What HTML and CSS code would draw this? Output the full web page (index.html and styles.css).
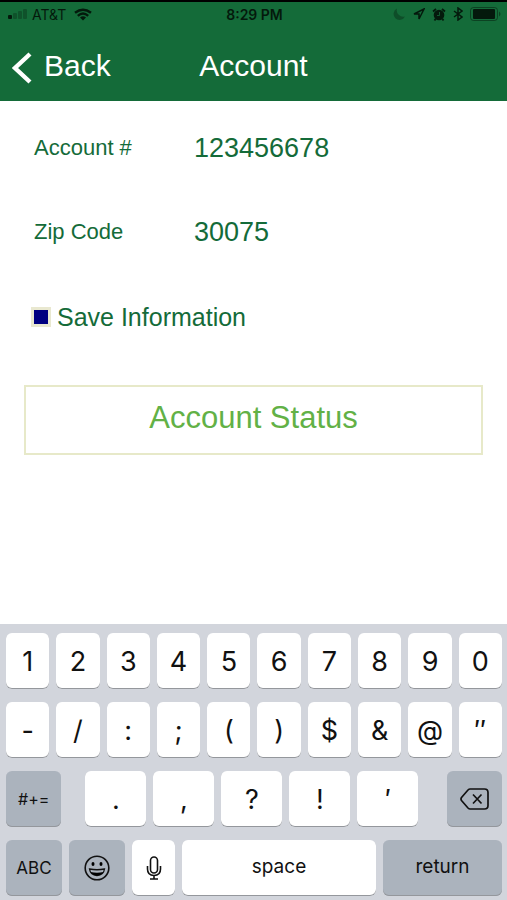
FILE: index.html
```html
<!DOCTYPE html>
<html lang="en">
<head>
<meta charset="utf-8">
<meta name="viewport" content="width=device-width, initial-scale=1">
<title>Account</title>
<link rel="stylesheet" href="styles.css">
</head>
<body>
<header class="header">
  <div class="status">
    <div class="status-side">
      <svg class="signal" width="20" height="12" viewBox="0 0 20 12" aria-hidden="true">
        <rect x="0" y="7" width="4" height="4" rx="1"/>
        <g opacity=".3"><rect x="5" y="5" width="4" height="6" rx="1"/><rect x="10" y="3" width="4" height="8" rx="1"/><rect x="15" y="1" width="4" height="10" rx="1"/></g>
      </svg>
      <span class="carrier">AT&amp;T</span>
      <svg width="18" height="13" viewBox="0 0 18 13" fill="none" stroke="currentColor" stroke-width="2.4" aria-hidden="true">
        <path d="M1 4.8Q9-1.5 17 4.8M3.8 7.8Q9 3.4 14.2 7.8"/>
        <path d="M6 9.5Q9 7.2 12 9.5L9 12.6Z" fill="currentColor" stroke="none"/>
      </svg>
    </div>
    <time class="clock">8:29 PM</time>
    <div class="status-side status-right">
      <svg width="13" height="12" viewBox="0 0 13 12" opacity=".35" aria-hidden="true"><path d="M4 .5A6 6 0 1 0 12 8.500A6.500 6.500 0 0 1 4 .5Z"/></svg>
      <svg width="12" height="12" viewBox="0 0 12 12" fill="none" stroke="currentColor" stroke-width="1.5" aria-hidden="true"><path d="M11 1L1 6H6V11Z"/></svg>
      <svg width="14" height="13" viewBox="0 0 14 13" aria-hidden="true"><circle cx="7" cy="7" r="5.3"/><path d="M1 3.5L4 1M13 3.5L10 1M3.5 11L2.5 12.5M10.5 11L11.500 12.5" stroke="currentColor" stroke-width="1.8"/><path d="M7.500 4V7.500H5" fill="none" stroke="#146b39" stroke-width=".8"/></svg>
      <svg width="10" height="14" viewBox="0 0 10 14" fill="none" stroke="currentColor" stroke-width="1.5" aria-hidden="true"><path d="M1 4L9 10L5 13V1L9 4L1 10"/></svg>
      <svg width="31" height="14" viewBox="0 0 31 14" aria-hidden="true"><rect x=".5" y=".5" width="27" height="13" rx="3" fill="none" stroke="currentColor" opacity=".5"/><rect x="3" y="2" width="22" height="10" rx="1"/><path d="M29 4.500Q32 7 29 9.500Z" opacity=".5"/></svg>
    </div>
  </div>
  <nav class="nav">
    <a class="back" href="#">
      <svg width="20" height="34" viewBox="0 0 20 34" fill="none" stroke="currentColor" stroke-width="4.4" aria-hidden="true"><path d="M18 3L3 17L18 31"/></svg>
      <span>Back</span>
    </a>
    <h1 class="title">Account</h1>
  </nav>
</header>

<main class="content">
  <form class="form">
    <div class="field">
      <label for="account">Account #</label>
      <input id="account" type="text" inputmode="numeric" value="123456678">
    </div>
    <div class="field">
      <label for="zip">Zip Code</label>
      <input id="zip" type="text" inputmode="numeric" value="30075">
    </div>
    <div class="save">
      <input id="save" type="checkbox" checked>
      <label for="save">Save Information</label>
    </div>
    <button class="submit" type="button">Account Status</button>
  </form>
</main>

<section class="keyboard" aria-label="Keyboard">
  <div class="row">
    <button class="key">1</button><button class="key">2</button><button class="key">3</button><button class="key">4</button><button class="key">5</button><button class="key">6</button><button class="key">7</button><button class="key">8</button><button class="key">9</button><button class="key">0</button>
  </div>
  <div class="row">
    <button class="key">-</button><button class="key">/</button><button class="key">:</button><button class="key">;</button><button class="key">(</button><button class="key">)</button><button class="key">$</button><button class="key">&amp;</button><button class="key">@</button><button class="key">″</button>
  </div>
  <div class="row row-marks">
    <button class="key dark symbols">#+=</button>
    <div class="marks">
      <button class="key">.</button><button class="key">,</button><button class="key">?</button><button class="key">!</button><button class="key">′</button>
    </div>
    <button class="key dark" aria-label="Delete">
      <svg width="29" height="22" viewBox="0 0 29 22" fill="none" stroke="currentColor" stroke-width="1.7" stroke-linejoin="round" aria-hidden="true"><path d="M10 1H24.5Q28 1 28 4.500V17.500Q28 21 24.500 21H10Q9 21 8 20L1.500 12.500Q.5 11 1.500 9.500L8 2Q9 1 10 1Z"/><path d="M13 6.500L21.500 15.500M21.500 6.500L13 15.500"/></svg>
    </button>
  </div>
  <div class="row row-bottom">
    <button class="key dark abc">ABC</button>
    <button class="key dark" aria-label="Emoji">
      <svg width="26" height="26" viewBox="0 0 26 26" aria-hidden="true"><circle cx="13" cy="13" r="11.8" fill="none" stroke="currentColor" stroke-width="1.6"/><ellipse cx="9" cy="9" rx="1.500" ry="1.900"/><ellipse cx="17" cy="9" rx="1.500" ry="1.900"/><path d="M5.500 14Q13 15.500 20.500 14Q19.500 20.500 13 20.500T5.500 14Z" fill="none" stroke="currentColor" stroke-width="1.300"/><path d="M6.500 17Q13 18.500 19.500 17Q17.500 20.500 13 20.500T6.500 17Z"/></svg>
    </button>
    <button class="key" aria-label="Dictate">
      <svg width="16" height="24" viewBox="0 0 16 24" fill="none" stroke="currentColor" stroke-width="1.6" aria-hidden="true"><rect x="4.500" y="1" width="7" height="16" rx="3.500"/><path d="M1.500 10V13Q1.500 19.500 8 19.500T14.500 13V10M8 19.500V23M4 23H12"/></svg>
    </button>
    <button class="key word">space</button>
    <button class="key dark word">return</button>
  </div>
</section>
</body>
</html>
```
FILE: styles.css
```css
* {
  box-sizing: border-box;
}

body {
  margin: 0;
  min-height: 100vh;
  display: flex;
  flex-direction: column;
  background: #fff;
  color: #146b39;
  font-family: "Liberation Sans", Arial, sans-serif;
}

svg {
  display: block;
  flex: none;
}

button,
input {
  margin: 0;
  font: inherit;
  color: inherit;
}

.header {
  background: #146b39;
  border-top: 2px solid #000;
}

.status {
  display: grid;
  grid-template-columns: 1fr auto 1fr;
  align-items: center;
  height: 24px;
  padding: 0 6px 0 8px;
  color: #04190c;
  font-family: Inter, sans-serif;
  font-size: 14px;
}

.status svg:not([fill="none"]) {
  fill: currentColor;
}

.status-side {
  display: flex;
  align-items: center;
  gap: 4px;
}

.carrier {
  margin-right: 4px;
}

.status-right {
  justify-content: flex-end;
  gap: 7px;
}

.clock {
  font-weight: 600;
}

.nav {
  display: grid;
  grid-template-columns: 1fr auto 1fr;
  align-items: center;
  height: 75px;
  padding: 8px 12px 0;
  color: #fff;
  font-size: 30px;
  line-height: 34px;
}

.back {
  display: flex;
  align-items: center;
  gap: 12px;
  color: inherit;
  text-decoration: none;
}

.back span,
.title {
  padding-bottom: 4px;
}

.title {
  margin: 0;
  font-size: 30px;
  font-weight: 400;
}

.content {
  flex: 1;
  padding: 23px 24px 32px;
}

.form {
  display: flex;
  flex-direction: column;
}

.field {
  display: grid;
  grid-template-columns: 160px 1fr;
  align-items: center;
  height: 48px;
  margin-bottom: 36px;
  padding-left: 10px;
  font-size: 22px;
}

.field input {
  width: 100%;
  padding: 0;
  border: 0;
  outline: 0;
  background: transparent;
  font-size: 27px;
}

.save {
  display: flex;
  align-items: center;
  gap: 6px;
  height: 50px;
  padding-left: 7px;
  font-size: 25px;
}

.save input {
  appearance: none;
  width: 20px;
  height: 20px;
  border: 3px solid #e9e8d0;
  background: #000080;
}

.submit {
  height: 70px;
  margin-top: 43px;
  padding: 0 0 4px;
  border: 2px solid #e7e9c9;
  background: #fff;
  color: #62b146;
  font-size: 31px;
}

.keyboard {
  display: flex;
  flex-direction: column;
  gap: 13px;
  padding: 9px 5px 4px 6px;
  background: #d2d5dc;
  color: #111;
  font-family: Inter, sans-serif;
}

.row {
  display: flex;
  gap: 7px;
}

.key {
  display: flex;
  flex: 1 1 0;
  align-items: center;
  justify-content: center;
  min-width: 0;
  height: 56px;
  padding: 0;
  border: 0;
  border-radius: 6px;
  background: #fff;
  box-shadow: inset 0 -1px 0 #94979c;
  font-size: 27px;
}

.dark {
  background: #abb3bd;
}

.row-marks {
  justify-content: space-between;
  display: grid;
  grid-template-columns: 55fr 334fr 55fr;
  gap: 24px;
}

.marks {
  display: flex;
  gap: 7px;
  padding-right: 4px;
}

.symbols {
  font-size: 16px;
}

.abc {
  font-size: 17px;
}

.row-bottom {
  display: grid;
  grid-template-columns: 56fr 56fr 43fr 194fr 119fr;
}

.word {
  padding-bottom: 4px;
  font-size: 19px;
}
```
